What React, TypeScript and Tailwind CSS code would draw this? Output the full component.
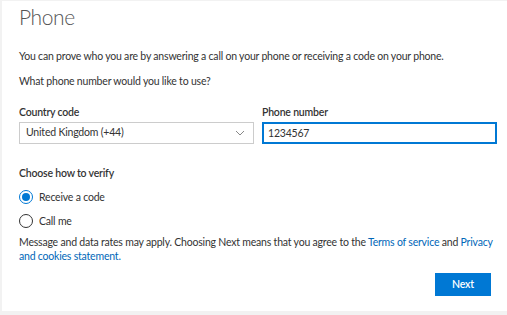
import { useState } from 'react';

export default function App() {
  const [method, setMethod] = useState<'code' | 'call'>('code');
  const [phone, setPhone] = useState('1234567');

  return (
    <div
      className="h-[315px] w-[507px] bg-[#f2f2f2] pl-[2px] pt-[1px] pb-[4px] text-[#333] tracking-[-0.2px]"
      style={{ fontFamily: '"Segoe UI", Lato, "Noto Sans", sans-serif' }}
    >
      <div className="flex h-full flex-col bg-white pl-[17px] pr-[10px]">
        <h1 className="mt-[2px] text-[21px] font-light leading-[28px] tracking-[-0.4px] text-[#555]">Phone</h1>

        <p className="mt-[17px] text-[10.5px] leading-[16px]">
          You can prove who you are by answering a call on your phone or receiving a code on your phone.
        </p>
        <p className="mt-[9px] text-[10.5px] leading-[16px]">What phone number would you like to use?</p>

        {/* Country + number */}
        <div className="mt-[16px] grid grid-cols-2 gap-[8px]">
          <div className="flex flex-col">
            <label className="text-[10.5px] font-semibold leading-[15px]">Country code</label>
            <div className="mt-[2px] flex h-[22px] items-center justify-between border border-[#ccc] pl-[6px] pr-[8px] text-[10.5px]">
              <span>United Kingdom (+44)</span>
              <svg width="10" height="6" viewBox="0 0 10 6" fill="none">
                <path d="M1 1l4 4 4-4" stroke="#888" strokeWidth="1" />
              </svg>
            </div>
          </div>
          <div className="flex flex-col">
            <label className="text-[10.5px] font-semibold leading-[15px]">Phone number</label>
            <input
              value={phone}
              onChange={(e) => setPhone(e.target.value)}
              className="mt-[2px] h-[22px] border-2 border-[#0078d4] px-[4px] text-[10.5px] text-[#333] outline-none"
              style={{ fontFamily: 'inherit' }}
            />
          </div>
        </div>

        <p className="mt-[22px] text-[10.5px] font-semibold leading-[15px]">Choose how to verify</p>

        <div className="mt-[9px] flex flex-col gap-[10px]">
          <button className="flex items-center gap-[6px] text-left" onClick={() => setMethod('code')}>
            <span
              className={
                'flex h-[14px] w-[14px] items-center justify-center rounded-full border ' +
                (method === 'code' ? 'border-[#0078d4]' : 'border-[#333]')
              }
            >
              {method === 'code' && <span className="h-[8px] w-[8px] rounded-full bg-[#0078d4]" />}
            </span>
            <span className="text-[10.5px] leading-[14px]">Receive a code</span>
          </button>
          <button className="flex items-center gap-[6px] text-left" onClick={() => setMethod('call')}>
            <span
              className={
                'flex h-[14px] w-[14px] items-center justify-center rounded-full border ' +
                (method === 'call' ? 'border-[#0078d4]' : 'border-[#333]')
              }
            >
              {method === 'call' && <span className="h-[8px] w-[8px] rounded-full bg-[#0078d4]" />}
            </span>
            <span className="text-[10.5px] leading-[14px]">Call me</span>
          </button>
        </div>

        <p className="mt-[7px] text-[10.5px] leading-[14px]">
          Message and data rates may apply. Choosing Next means that you agree to the{' '}
          <a href="#" className="text-[#0067b8]">Terms of service</a> and{' '}
          <a href="#" className="text-[#0067b8]">Privacy and cookies statement.</a>
        </p>

        <div className="mt-[10px] flex justify-end pr-[6px]">
          <button className="h-[23px] w-[56px] bg-[#0078d4] text-[10.5px] font-semibold text-white">Next</button>
        </div>
      </div>
    </div>
  );
}
